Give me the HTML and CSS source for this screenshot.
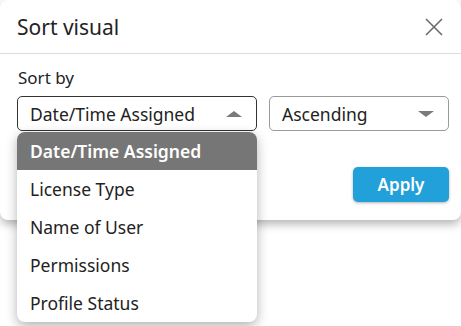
FILE: index.html
```html
<!DOCTYPE html>
<html lang="en">
<head>
    <meta charset="UTF-8">
    <meta name="viewport" content="width=device-width, initial-scale=1.0">
    <title>Sort visual</title>
    <link rel="stylesheet" href="styles.css">
</head>
<body>

    <div class="modal">
        <div class="modal-header">
            <h1>Sort visual</h1>
            <button class="close-btn" aria-label="Close">
                <svg width="18" height="18" viewBox="0 0 18 18">
                    <path d="M1 1L17 17M17 1L1 17" stroke="#6b6b6b" stroke-width="1.6" fill="none"/>
                </svg>
            </button>
        </div>

        <div class="modal-body">
            <label class="field-label">Sort by</label>
            <div class="select-row">
                <div class="select-wrap">
                    <div class="select select-open">
                        <span>Date/Time Assigned</span>
                        <span class="caret caret-up"></span>
                    </div>
                    <ul class="dropdown">
                        <li class="selected">Date/Time Assigned</li>
                        <li>License Type</li>
                        <li>Name of User</li>
                        <li>Permissions</li>
                        <li>Profile Status</li>
                    </ul>
                </div>
                <div class="select select-order">
                    <span>Ascending</span>
                    <span class="caret caret-down"></span>
                </div>
            </div>

            <div class="modal-footer">
                <button class="apply-btn">Apply</button>
            </div>
        </div>
    </div>

</body>
</html>
```

FILE: styles.css
```css
html {
    height: 100%;
}

body {
    font-family: "Noto Sans", "Open Sans", sans-serif;
    background-color: #fff;
    margin: 0;
    padding: 0;
    min-height: 100%;
    color: #16191f;
}

.modal {
    width: 461px;
    height: 220px;
    background-color: #fff;
    border-radius: 8px;
    box-shadow: 0 4px 10px rgba(0, 0, 0, 0.3);
}

.modal-header {
    display: flex;
    align-items: center;
    justify-content: space-between;
    height: 53px;
    padding: 0 18px 0 17px;
    border-bottom: 1px solid #dcdcdc;
}

.modal-header h1 {
    margin: 0;
    font-size: 21px;
    font-weight: 400;
    color: #232323;
}

.close-btn {
    background: none;
    border: none;
    padding: 0;
    width: 18px;
    height: 18px;
    cursor: pointer;
}

.modal-body {
    padding: 12px 12px 0 17px;
}

.field-label {
    display: block;
    font-size: 17px;
    line-height: 24px;
    color: #232323;
    margin-left: 1px;
}

.select-row {
    display: flex;
    gap: 12px;
    margin-top: 6px;
}

.select-wrap {
    position: relative;
}

.select {
    box-sizing: border-box;
    display: flex;
    align-items: center;
    justify-content: space-between;
    height: 35px;
    padding: 0 14px 0 12px;
    font-size: 17.5px;
    border: 1px solid #9a9a9a;
    border-radius: 5px;
    color: #222;
}

.select-open {
    width: 240px;
    border-color: #333;
}

.select-order {
    width: 180px;
}

.caret {
    width: 0;
    height: 0;
    border-left: 8px solid transparent;
    border-right: 8px solid transparent;
}

.caret-up {
    border-bottom: 6px solid #7a7a7a;
}

.caret-down {
    border-top: 6px solid #7a7a7a;
}

.dropdown {
    position: absolute;
    top: 36px;
    left: 0;
    width: 240px;
    margin: 0;
    padding: 0;
    list-style: none;
    background-color: #fff;
    border-radius: 8px;
    box-shadow: 0 4px 12px rgba(0, 0, 0, 0.3);
    overflow: hidden;
    z-index: 2;
}

.dropdown li {
    height: 38px;
    line-height: 38px;
    padding-left: 13px;
    font-size: 17.5px;
    color: #222;
}

.dropdown li.selected {
    background-color: #767676;
    color: #fff;
    font-weight: 600;
}

.modal-footer {
    display: flex;
    justify-content: flex-end;
    margin-top: 36px;
}

.apply-btn {
    width: 96px;
    height: 35px;
    font-family: inherit;
    font-size: 17px;
    font-weight: 600;
    color: #fff;
    background-color: #21a0d9;
    border: none;
    border-radius: 5px;
    box-shadow: 0 1px 3px rgba(0, 0, 0, 0.3);
    cursor: pointer;
}
```
